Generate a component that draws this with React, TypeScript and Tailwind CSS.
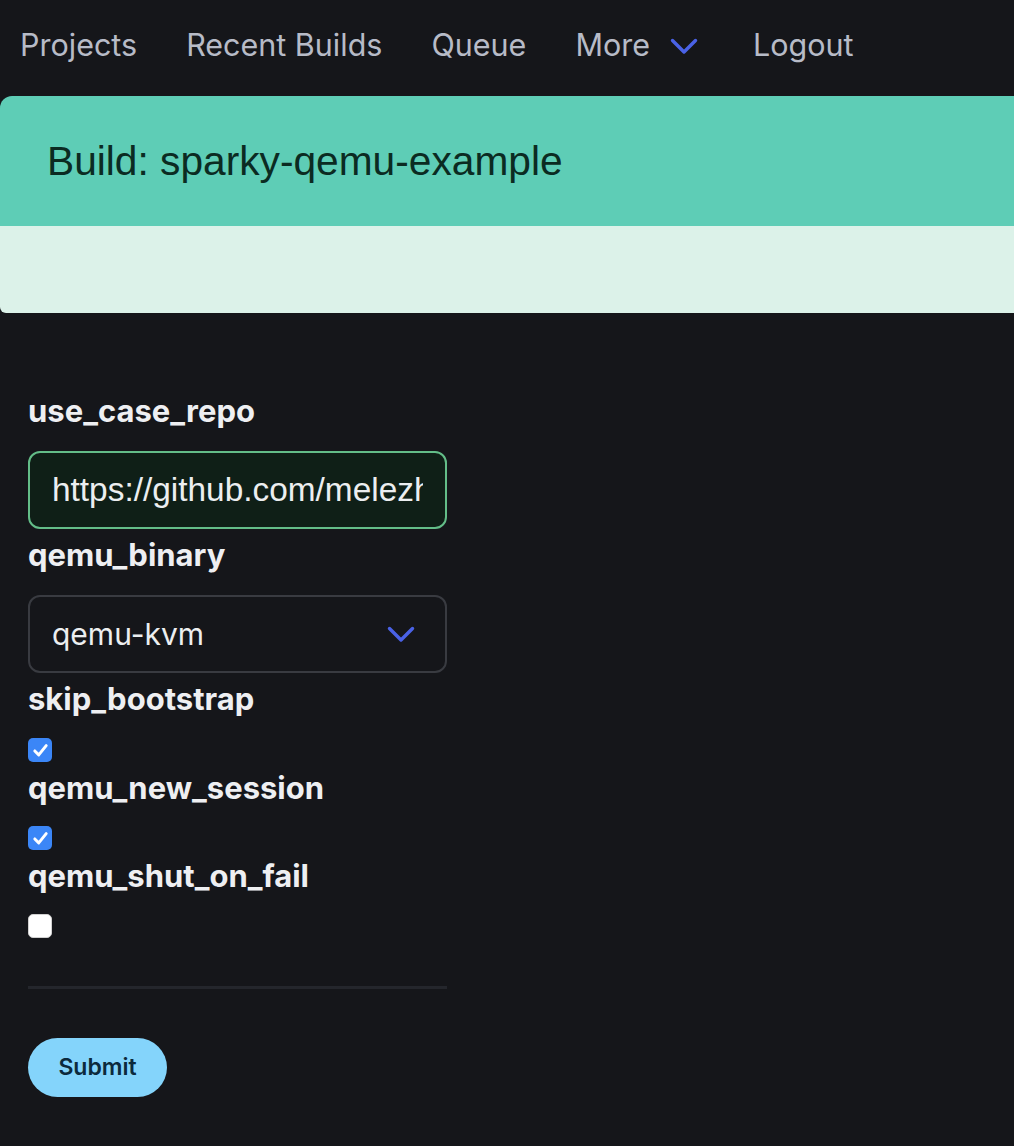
import React from "react";

function Chevron({ className }: { className?: string }) {
  return (
    <svg viewBox="0 0 28 17" className={className} fill="none">
      <path d="M2.5 2.5 L14 14 L25.5 2.5" stroke="#4a62e6" strokeWidth="3.4" strokeLinecap="round" strokeLinejoin="round" />
    </svg>
  );
}

function CheckBox({ checked }: { checked: boolean }) {
  return checked ? (
    <div className="w-[24px] h-[24px] rounded-[5px] bg-[#3b86f7] flex items-center justify-center">
      <svg viewBox="0 0 24 24" className="w-[21px] h-[21px]" fill="none">
        <path d="M5.5 12.5 L10 17 L18.5 6.5" stroke="white" strokeWidth="3.4" strokeLinecap="round" strokeLinejoin="round" />
      </svg>
    </div>
  ) : (
    <div className="w-[24px] h-[24px] rounded-[5px] bg-white border border-[#d0d0d0]" />
  );
}

function Label({ children, mb }: { children: React.ReactNode; mb: string }) {
  return (
    <div className={`text-[31px] leading-[36px] font-bold text-[#eeeff2] font-['Inter',sans-serif] ${mb}`}>
      {children}
    </div>
  );
}

export default function App() {
  return (
    <div className="min-h-[1146px] bg-[#15161a] overflow-hidden">
      <nav className="h-[96px] pb-[6px] pl-[20px] flex items-center gap-[49px] text-[30.5px] leading-[36px] text-[#b7bbc7] font-['Inter',sans-serif]">
        <span>Projects</span>
        <span>Recent Builds</span>
        <span>Queue</span>
        <span className="flex items-center gap-[20px]">
          More
          <Chevron className="w-[28px] h-[17px] mt-[2px]" />
        </span>
        <span className="ml-[6px]">Logout</span>
      </nav>

      <div className="w-[1040px]">
        <div className="h-[130px] bg-[#5ecdb6] rounded-tl-[12px] flex items-center pl-[47px] pt-[2px]">
          <h1 className="text-[40.7px] text-[#0b2b22] font-['Liberation_Sans',sans-serif]">
            Build: sparky-qemu-example
          </h1>
        </div>
        <div className="h-[87px] bg-[#dcf2e9] rounded-bl-[6px]" />
      </div>

      <form className="pl-[28px] pt-[80px] w-[447px]">
        <div className="mb-[8px]">
          <Label mb="mb-[22px]">use_case_repo</Label>
          <div className="h-[78px] rounded-[12px] border-2 border-[#63bd88] bg-[#0f1f17] flex items-center pl-[22px] pr-[22px]">
            <div className="flex-1 overflow-hidden">
              <span className="text-[33.4px] text-[#eceef0] whitespace-nowrap font-['Liberation_Sans',sans-serif]">
                https://github.com/melezhik
              </span>
            </div>
          </div>
        </div>
        <div className="mb-[8px]">
          <Label mb="mb-[22px]">qemu_binary</Label>
          <div className="h-[78px] rounded-[12px] border-2 border-[#393b41] flex items-center justify-between pl-[22px] pr-[30px]">
            <span className="text-[30px] text-[#eceef0] font-['Inter',sans-serif]">qemu-kvm</span>
            <Chevron className="w-[28px] h-[17px]" />
          </div>
        </div>
        <div className="mb-[8px]">
          <Label mb="mb-[21px]">skip_bootstrap</Label>
          <CheckBox checked />
        </div>
        <div className="mb-[8px]">
          <Label mb="mb-[20px]">qemu_new_session</Label>
          <CheckBox checked />
        </div>
        <div>
          <Label mb="mb-[20px]">qemu_shut_on_fail</Label>
          <CheckBox checked={false} />
        </div>

        <div className="h-[3px] bg-[#24262c] mt-[48px] mb-[49px]" />

        <button
          type="button"
          className="w-[139px] h-[59px] rounded-full bg-[#84d4fb] text-[#0c2a3c] text-[23px] font-semibold font-['Inter',sans-serif]"
        >
          Submit
        </button>
      </form>
    </div>
  );
}
